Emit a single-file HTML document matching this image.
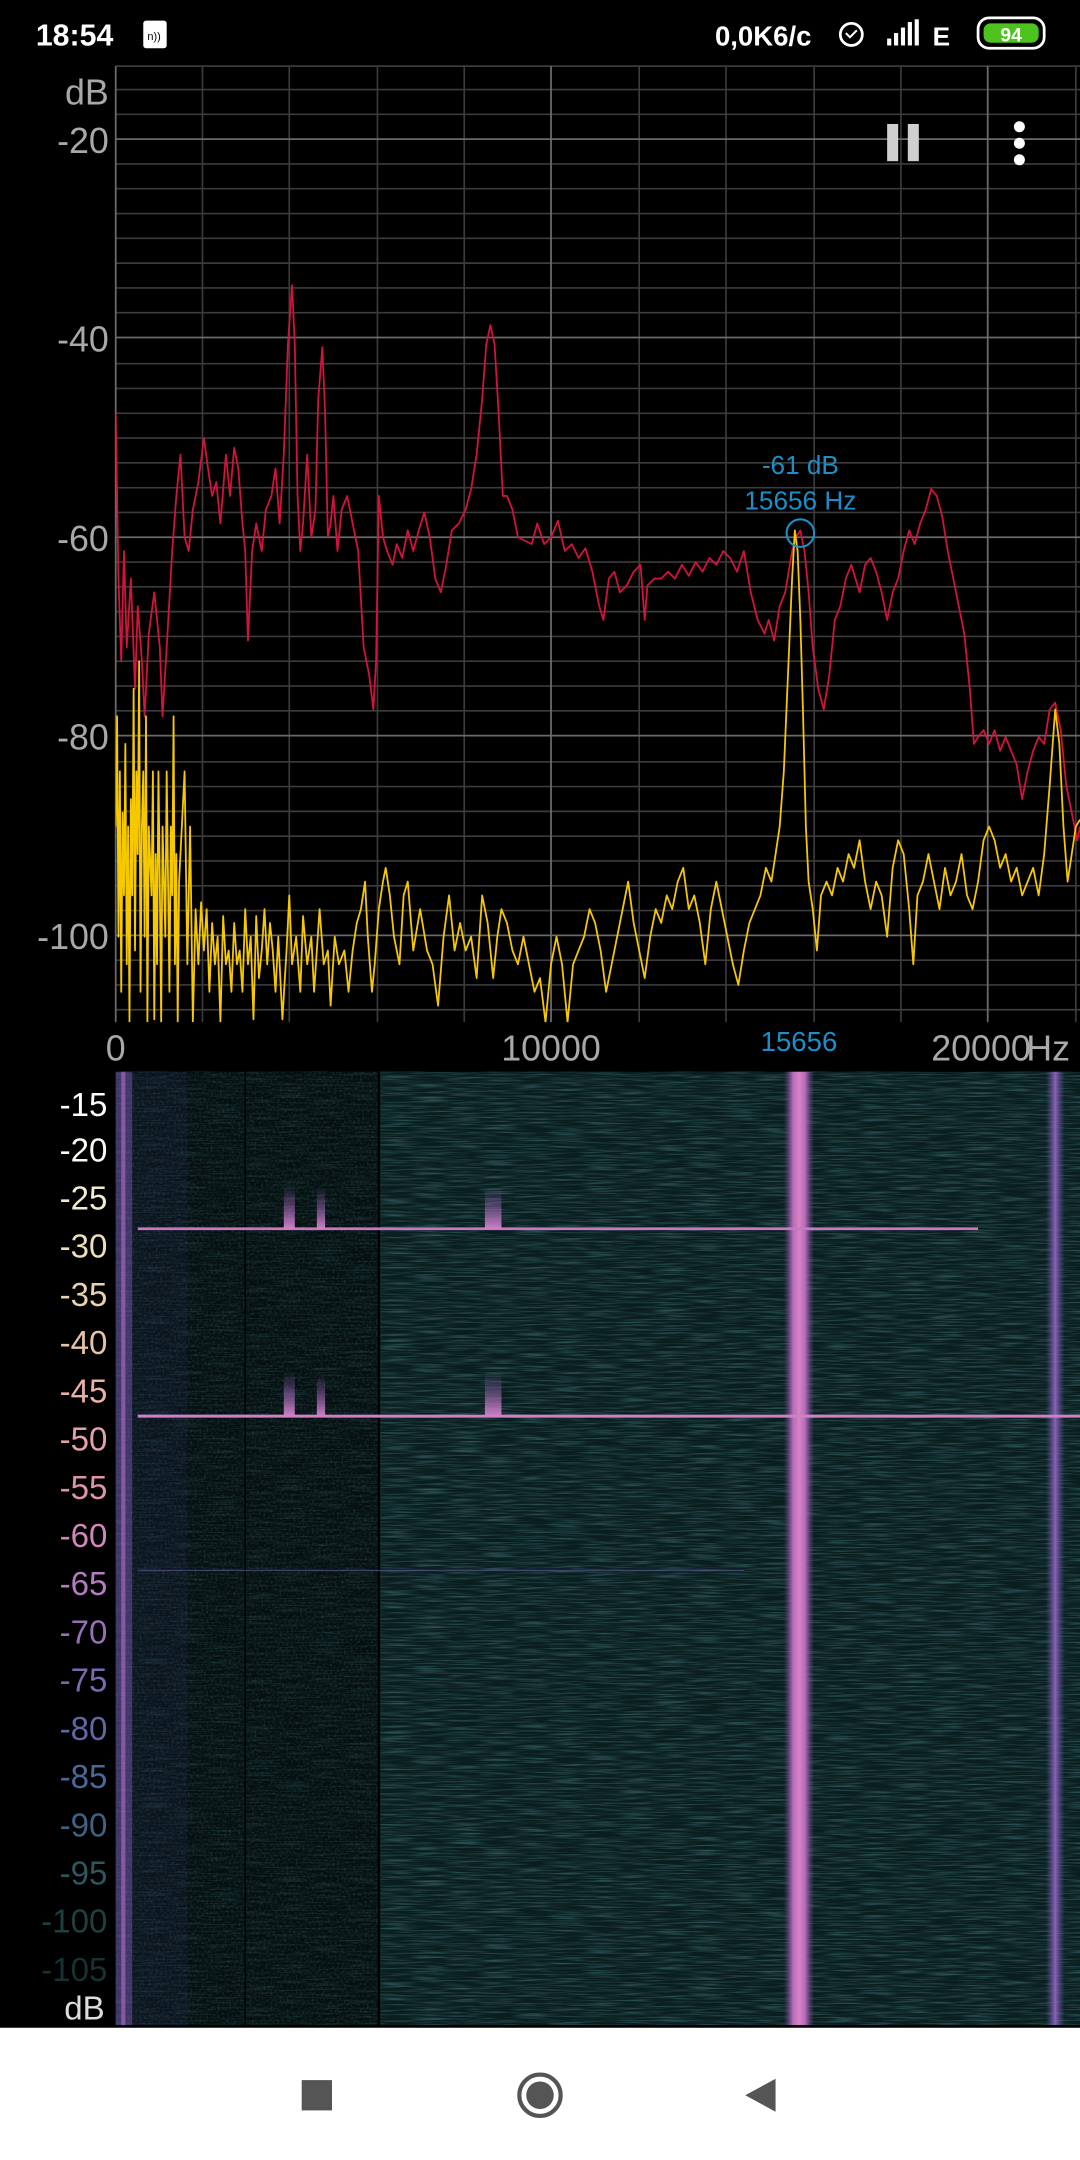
<!DOCTYPE html>
<html><head><meta charset="utf-8"><style>
html,body{margin:0;padding:0;background:#000;width:1080px;height:2160px;overflow:hidden}
svg{display:block}
text{font-family:"Liberation Sans",sans-serif}
</style></head><body>
<svg width="1080" height="2160" viewBox="0 0 784 1568" xmlns="http://www.w3.org/2000/svg">
<defs>
<filter id="nz" x="0" y="0" width="100%" height="100%">
<feTurbulence type="fractalNoise" baseFrequency="0.04 0.9" numOctaves="2" seed="3"/>
<feColorMatrix type="matrix" values="0 0 0 0 0.06  0 0 0 0 0.20  0 0 0 0 0.22  0 0 0 1.4 -0.6"/>
</filter>
<filter id="nz2" x="0" y="0" width="100%" height="100%">
<feTurbulence type="fractalNoise" baseFrequency="0.6 0.6" numOctaves="1" seed="7"/>
<feColorMatrix type="matrix" values="0 0 0 0 0.05  0 0 0 0 0.18  0 0 0 0 0.18  0 0 0 1.6 -0.75"/>
</filter>
<linearGradient id="band" x1="0" x2="1" y1="0" y2="0">
<stop offset="0" stop-color="#6a4a9a" stop-opacity="0"/><stop offset="0.3" stop-color="#b86ab8"/><stop offset="0.5" stop-color="#d884c4"/><stop offset="0.7" stop-color="#b86ab8"/><stop offset="1" stop-color="#6a4a9a" stop-opacity="0"/>
</linearGradient>
<linearGradient id="band2" x1="0" x2="1" y1="0" y2="0">
<stop offset="0" stop-color="#5a4a9a" stop-opacity="0"/><stop offset="0.5" stop-color="#8a62b8"/><stop offset="1" stop-color="#5a4a9a" stop-opacity="0"/>
</linearGradient>
<linearGradient id="blob" x1="0" x2="0" y1="0" y2="1">
<stop offset="0" stop-color="#8a5ab8" stop-opacity="0"/><stop offset="1" stop-color="#d080c8"/>
</linearGradient>
</defs>
<rect width="784" height="1568" fill="#000"/>
<!-- status bar -->
<text x="26" y="33" fill="#fff" font-size="22" font-weight="bold">18:54</text>
<rect x="104" y="15" width="17" height="20" rx="2" fill="#fff"/>
<text x="107" y="29" font-size="8" fill="#000">n))</text>
<text x="519" y="33" fill="#fff" font-size="20" font-weight="bold">0,0K6/c</text>
<circle cx="618" cy="25" r="8" fill="none" stroke="#fff" stroke-width="2"/>
<path d="M614 24l3 3 5-5" stroke="#fff" stroke-width="1.5" fill="none"/>
<rect x="644" y="28" width="3" height="5" fill="#fff"/><rect x="649" y="24" width="3" height="9" fill="#fff"/><rect x="654" y="20" width="3" height="13" fill="#fff"/><rect x="659" y="16" width="3" height="17" fill="#fff"/><rect x="664" y="14" width="3" height="19" fill="#fff"/>
<text x="677" y="33" fill="#fff" font-size="19" font-weight="bold">E</text>
<rect x="710" y="13" width="48" height="22" rx="8" fill="none" stroke="#fff" stroke-width="2"/>
<rect x="714" y="17" width="40" height="14" rx="5" fill="#4ec21e"/>
<text x="734" y="30" fill="#fff" font-size="14" font-weight="bold" text-anchor="middle">94</text>

<!-- grid -->
<g stroke="#3c3c3c" stroke-width="1.2">
<line x1="84" x2="784" y1="65" y2="65"/><line x1="84" x2="784" y1="83" y2="83"/>
<line x1="84" x2="784" y1="119" y2="119"/><line x1="84" x2="784" y1="137" y2="137"/><line x1="84" x2="784" y1="155" y2="155"/><line x1="84" x2="784" y1="173" y2="173"/><line x1="84" x2="784" y1="191" y2="191"/><line x1="84" x2="784" y1="209" y2="209"/><line x1="84" x2="784" y1="227" y2="227"/>
<line x1="84" x2="784" y1="264" y2="264"/><line x1="84" x2="784" y1="282" y2="282"/><line x1="84" x2="784" y1="300" y2="300"/><line x1="84" x2="784" y1="318" y2="318"/><line x1="84" x2="784" y1="336" y2="336"/><line x1="84" x2="784" y1="354" y2="354"/><line x1="84" x2="784" y1="372" y2="372"/>
<line x1="84" x2="784" y1="408" y2="408"/><line x1="84" x2="784" y1="426" y2="426"/><line x1="84" x2="784" y1="444" y2="444"/><line x1="84" x2="784" y1="462" y2="462"/><line x1="84" x2="784" y1="480" y2="480"/><line x1="84" x2="784" y1="498" y2="498"/><line x1="84" x2="784" y1="516" y2="516"/>
<line x1="84" x2="784" y1="553" y2="553"/><line x1="84" x2="784" y1="571" y2="571"/><line x1="84" x2="784" y1="589" y2="589"/><line x1="84" x2="784" y1="607" y2="607"/><line x1="84" x2="784" y1="625" y2="625"/><line x1="84" x2="784" y1="643" y2="643"/><line x1="84" x2="784" y1="661" y2="661"/>
<line x1="84" x2="784" y1="697" y2="697"/><line x1="84" x2="784" y1="715" y2="715"/><line x1="84" x2="784" y1="733" y2="733"/>
<line x1="84" x2="784" y1="48" y2="48"/>
<line x1="147" x2="147" y1="48" y2="742"/><line x1="210" x2="210" y1="48" y2="742"/><line x1="274" x2="274" y1="48" y2="742"/><line x1="337" x2="337" y1="48" y2="742"/><line x1="464" x2="464" y1="48" y2="742"/><line x1="527" x2="527" y1="48" y2="742"/><line x1="591" x2="591" y1="48" y2="742"/><line x1="654" x2="654" y1="48" y2="742"/><line x1="781" x2="781" y1="48" y2="742"/>
</g>
<g stroke="#6a6a6a" stroke-width="1.3">
<line x1="84" x2="784" y1="101" y2="101"/><line x1="84" x2="784" y1="245" y2="245"/><line x1="84" x2="784" y1="390" y2="390"/><line x1="84" x2="784" y1="534" y2="534"/><line x1="84" x2="784" y1="679" y2="679"/>
<line x1="84" x2="84" y1="48" y2="742"/><line x1="400" x2="400" y1="48" y2="742"/><line x1="717" x2="717" y1="48" y2="742"/>
</g>
<g fill="#a8a8a8" font-size="26" text-anchor="end">
<text x="79" y="76">dB</text><text x="79" y="111">-20</text><text x="79" y="255">-40</text><text x="79" y="400">-60</text><text x="79" y="544">-80</text><text x="79" y="689">-100</text>
</g>
<g fill="#a8a8a8" font-size="26">
<text x="84" y="770" text-anchor="middle">0</text><text x="400" y="770" text-anchor="middle">10000</text><text x="676" y="770">20000</text><text x="745" y="770" fill="#aaa">Hz</text>
</g>
<text x="580" y="763" fill="#1a8fc9" font-size="20" text-anchor="middle">15656</text>
<!-- pause & menu -->
<rect x="644" y="90" width="8" height="27" fill="#cfcfcf"/><rect x="659" y="90" width="8" height="27" fill="#cfcfcf"/>
<circle cx="740" cy="92" r="4" fill="#fff"/><circle cx="740" cy="104" r="4" fill="#fff"/><circle cx="740" cy="116" r="4" fill="#fff"/>

<clipPath id="gc"><rect x="84" y="48" width="700" height="694"/></clipPath>
<g clip-path="url(#gc)" fill="none" stroke-width="1.3" stroke-linejoin="round">
<polyline stroke="#d4123e" points="84,300 86,420 88,480 90,400 92,470 95,420 98,500 100,440 103,480 105,520 108,460 112,430 116,470 118,520 121,470 125,400 128,360 131,330 134,390 137,400 140,370 144,350 148,318 151,340 154,360 157,350 160,380 164,330 167,360 170,325 173,340 176,380 178,400 180,465 183,400 186,380 190,400 193,370 197,360 200,340 203,380 206,330 209,250 212,207 214,250 216,360 218,400 220,380 223,330 226,390 229,370 231,290 234,252 236,300 238,390 240,380 242,360 245,400 248,370 252,360 256,380 260,400 264,470 268,490 271,515 273,480 275,360 278,390 281,400 285,410 288,395 292,405 296,385 300,400 304,385 308,372 312,390 316,420 320,430 324,410 328,385 333,380 338,370 342,355 346,330 350,290 353,250 356,236 359,250 362,300 365,360 368,360 372,370 376,390 380,392 386,395 390,380 395,395 400,390 405,378 410,400 415,395 420,405 425,398 430,415 435,440 438,450 442,420 446,415 450,430 455,425 460,415 465,410 468,450 470,425 475,420 480,420 485,415 490,420 495,410 500,418 505,408 510,415 515,405 520,410 525,400 530,405 535,415 540,400 545,430 550,450 555,460 558,450 562,465 566,440 570,430 575,400 578,390 581,385 584,400 587,430 590,470 594,500 598,515 602,490 606,450 610,440 614,420 618,410 624,430 628,410 632,405 636,415 640,430 644,450 648,430 652,420 656,400 660,385 664,395 668,380 672,370 676,355 680,360 684,375 688,400 692,420 696,440 700,460 704,500 707,540 710,535 714,530 718,540 722,530 726,545 730,535 734,545 738,555 742,580 746,560 750,545 754,535 758,540 762,515 766,510 770,530 774,570 778,590 782,610 784,600"/>
<polyline stroke="#f5c800" points="84,600 85,520 86,680 87,560 88,720 89,590 90,650 91,540 92,700 93,600 94,742 95,580 96,650 97,500 98,690 99,560 100,620 101,480 102,720 103,600 104,560 105,680 106,520 107,742 108,600 110,650 111,560 112,740 113,620 114,700 115,560 116,640 117,742 118,600 120,680 121,560 123,720 124,600 125,650 126,520 127,700 128,620 129,742 130,640 132,600 134,560 136,700 138,600 140,742 142,660 144,700 146,655 148,690 150,660 152,720 154,670 156,700 158,680 160,742 162,665 164,700 166,690 168,720 170,670 172,700 174,690 176,720 178,660 180,700 182,680 184,740 186,665 188,710 190,690 192,660 194,700 196,670 198,690 200,720 202,680 205,740 208,690 210,650 212,700 215,680 218,720 220,665 223,700 226,680 228,720 230,690 232,660 235,700 238,690 240,730 243,680 246,700 250,690 253,720 256,690 259,670 262,660 265,640 267,680 270,720 272,700 275,660 278,640 280,630 283,650 286,680 290,700 293,650 296,640 300,690 305,660 310,690 314,700 318,730 322,680 326,650 330,690 334,670 338,690 342,680 346,710 350,650 354,670 358,710 361,680 364,660 368,670 372,690 376,700 380,680 384,700 388,720 392,710 396,742 400,700 404,680 408,700 412,742 416,700 420,690 424,680 428,660 432,670 436,690 440,720 444,700 448,680 452,660 456,640 460,670 464,690 468,710 472,680 476,660 480,670 484,650 488,660 492,640 496,630 500,660 504,650 508,670 512,700 516,660 520,640 524,660 528,680 532,700 536,715 540,690 544,670 548,660 552,650 556,630 560,640 563,620 566,600 569,560 572,490 575,420 577,385 579,400 581,450 583,520 585,600 587,640 590,660 593,690 596,650 600,640 604,650 608,630 612,640 616,620 620,630 624,610 628,640 632,660 636,640 640,650 644,680 648,630 652,610 656,620 660,660 663,700 666,650 670,640 674,620 678,640 682,660 686,630 690,650 694,640 698,620 702,650 706,660 710,640 714,610 718,600 722,610 726,630 730,620 734,640 738,630 742,650 746,640 750,630 754,650 758,620 762,570 766,515 769,540 772,600 775,640 778,620 781,600 784,595"/>
</g>
<circle cx="581" cy="387" r="10" fill="none" stroke="#1a8fc9" stroke-width="1.5"/>
<g fill="#1a8fc9" font-size="19" text-anchor="middle"><text x="581" y="344">-61 dB</text><text x="581" y="370">15656 Hz</text></g>

<!-- spectrogram -->
<rect x="84" y="778" width="700" height="692" fill="#0a1e1f"/>
<rect x="84" y="778" width="700" height="692" filter="url(#nz)"/>
<rect x="84" y="778" width="192" height="692" fill="#000" opacity="0.5"/>
<rect x="84" y="778" width="192" height="692" filter="url(#nz2)" opacity="0.5"/>
<rect x="84" y="778" width="12" height="692" fill="#7a5ab8" opacity="0.5"/>
<rect x="88" y="778" width="3" height="692" fill="#b070c8" opacity="0.6"/>
<rect x="96" y="778" width="40" height="692" fill="#3a3a80" opacity="0.12"/>
<line x1="178" x2="178" y1="778" y2="1470" stroke="#000" stroke-width="1"/>
<line x1="275" x2="275" y1="778" y2="1470" stroke="#000" stroke-width="1.5"/>
<rect x="569" y="778" width="22" height="692" fill="url(#band)"/>
<rect x="759" y="778" width="14" height="692" fill="url(#band2)"/>
<line x1="100" x2="710" y1="892" y2="892" stroke="#c878c0" stroke-width="2"/>
<line x1="100" x2="784" y1="1028" y2="1028" stroke="#d080c4" stroke-width="2.2"/>
<line x1="100" x2="540" y1="1140" y2="1140" stroke="#5a5a9a" stroke-width="1" opacity="0.6"/>
<g fill="url(#blob)">
<rect x="206" y="860" width="8" height="32"/><rect x="230" y="862" width="6" height="30"/><rect x="352" y="862" width="12" height="30"/>
<rect x="206" y="995" width="8" height="33"/><rect x="230" y="998" width="6" height="30"/><rect x="352" y="996" width="12" height="32"/>
</g>
<g font-size="24" text-anchor="end">
<text x="78" y="810" fill="#fff">-15</text><text x="78" y="843" fill="#fcfcf4">-20</text><text x="78" y="878" fill="#f2eccc">-25</text><text x="78" y="913" fill="#eedfb8">-30</text><text x="78" y="948" fill="#ecd2ac">-35</text><text x="78" y="983" fill="#e6c2a8">-40</text><text x="78" y="1018" fill="#eab0a8">-45</text><text x="78" y="1053" fill="#e4a0a8">-50</text><text x="78" y="1088" fill="#de92b0">-55</text><text x="78" y="1123" fill="#d088b8">-60</text><text x="78" y="1158" fill="#b47cc0">-65</text><text x="78" y="1193" fill="#9470b6">-70</text><text x="78" y="1228" fill="#7a68b0">-75</text><text x="78" y="1263" fill="#6068a6">-80</text><text x="78" y="1298" fill="#4c6898">-85</text><text x="78" y="1333" fill="#3c6284">-90</text><text x="78" y="1368" fill="#2e5660">-95</text><text x="78" y="1403" fill="#1e4040">-100</text><text x="78" y="1438" fill="#163232">-105</text><text x="76" y="1466" fill="#ddd">dB</text>
</g>

<!-- nav bar -->
<rect x="0" y="1472" width="784" height="96" fill="#fff"/>
<rect x="219" y="1510" width="22" height="22" fill="#555"/>
<circle cx="392" cy="1521" r="15" fill="none" stroke="#555" stroke-width="3"/>
<circle cx="392" cy="1521" r="10" fill="#555"/>
<path d="M563 1509 L563 1533 L541 1521 Z" fill="#555"/>
</svg>
</body></html>
